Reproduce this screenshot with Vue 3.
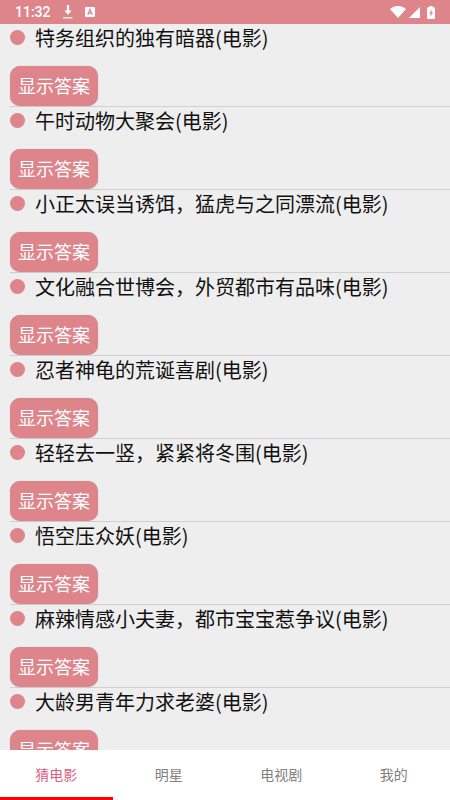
<script setup>
import { ref } from 'vue'

const riddles = [
  '特务组织的独有暗器(电影)',
  '午时动物大聚会(电影)',
  '小正太误当诱饵，猛虎与之同漂流(电影)',
  '文化融合世博会，外贸都市有品味(电影)',
  '忍者神龟的荒诞喜剧(电影)',
  '轻轻去一竖，紧紧将冬围(电影)',
  '悟空压众妖(电影)',
  '麻辣情感小夫妻，都市宝宝惹争议(电影)',
  '大龄男青年力求老婆(电影)',
]
const tabs = ['猜电影', '明星', '电视剧', '我的']
const active = ref(0)
</script>

<template>
  <div class="screen">
    <header class="status">
      <span class="time">11:32</span>
      <svg class="download" width="10" height="14" viewBox="0 0 10 14">
        <path d="M3.900 0h2.200v5.500H8.600L5 9.700 1.400 5.500h2.500z" fill="#fff" />
        <rect y="12.200" width="9.500" height="1.200" fill="#fff" />
      </svg>
      <svg class="badge" width="10" height="10" viewBox="0 0 10 10">
        <rect width="10" height="10" rx="1.200" fill="#fff" />
        <path d="M2.700 7.800 5 2.300 7.300 7.800M3.500 6.200h3" fill="none" stroke="#dd858b" stroke-width="1.200" />
      </svg>
      <span class="spacer"></span>
      <svg class="wifi" width="16" height="12" viewBox="0 0 16 12">
        <path d="M8 12 0 3C4.500-1 11.500-1 16 3z" fill="#fff" />
      </svg>
      <svg class="signal" width="11" height="11" viewBox="0 0 11 11">
        <path d="M11 0v11H0z" fill="#fff" />
      </svg>
      <svg class="battery" width="8" height="13" viewBox="0 0 8 13">
        <path d="M2.500 0h3v1.300H7q1 0 1 1V12q0 1-1 1H1q-1 0-1-1V2.300q0-1 1-1h1.500z" fill="#fff" />
        <path d="M5.400 3.200 2 7.400h1.900L2.800 10.900 6.200 6.500H4.400z" fill="#dd858b" />
      </svg>
    </header>

    <main class="list">
      <section v-for="riddle in riddles" :key="riddle" class="row">
        <div class="question">
          <i class="dot"></i>
          <span>{{ riddle }}</span>
        </div>
        <button class="answer">显示答案</button>
      </section>
    </main>

    <nav class="tabs">
      <div
        v-for="(tab, i) in tabs"
        :key="tab"
        class="tab"
        :class="{ active: active === i }"
        @click="active = i"
      >
        {{ tab }}
      </div>
    </nav>
  </div>
</template>

<style>
body {
  margin: 0;
}
</style>

<style scoped>
.screen {
  display: flex;
  flex-direction: column;
  width: 450px;
  height: 800px;
  overflow: hidden;
  background: #eeeeee;
  font-family: 'Noto Sans CJK SC', sans-serif;
}
.status {
  display: flex;
  align-items: center;
  flex: none;
  height: 24px;
  box-sizing: border-box;
  padding: 0 14px 0 15px;
  background: #dd858b;
  color: #fff;
}
.time {
  width: 48px;
  height: 24px;
  font: 500 14px/25px Roboto, sans-serif;
}
.badge {
  margin-left: 12px;
}
.spacer {
  flex: 1;
}
.signal {
  margin: 1px 7px 0 3px;
}
.battery {
  margin-right: 1px;
}
.list {
  flex: 1;
  min-height: 0;
  overflow: hidden;
  padding-left: 10px;
}
.row {
  height: 83px;
  box-sizing: border-box;
  border-bottom: 1px solid #d0d0d0;
}
.question {
  display: flex;
  align-items: flex-start;
  height: 42px;
  font-size: 20px;
  line-height: 27px;
  color: #111;
  white-space: nowrap;
}
.dot {
  width: 15px;
  height: 15px;
  margin: 6px 10px 0 0;
  border-radius: 50%;
  background: #dd858b;
}
.answer {
  display: block;
  width: 88px;
  height: 40px;
  padding: 0 0 2px;
  border: 0;
  border-radius: 10px;
  background: #dd858b;
  box-shadow: 0 0 1px rgba(0, 0, 0, 0.3);
  color: #fff;
  font-family: inherit;
  font-size: 18px;
  line-height: 38px;
}
.tabs {
  display: flex;
  flex: none;
  height: 50px;
  background: #fff;
}
.tab {
  flex: 1;
  box-sizing: border-box;
  border-bottom: 3px solid transparent;
  text-align: center;
  font-size: 14px;
  line-height: 48px;
  color: #808080;
}
.tab.active {
  color: #d8607f;
  border-bottom-color: #f00;
}
</style>
